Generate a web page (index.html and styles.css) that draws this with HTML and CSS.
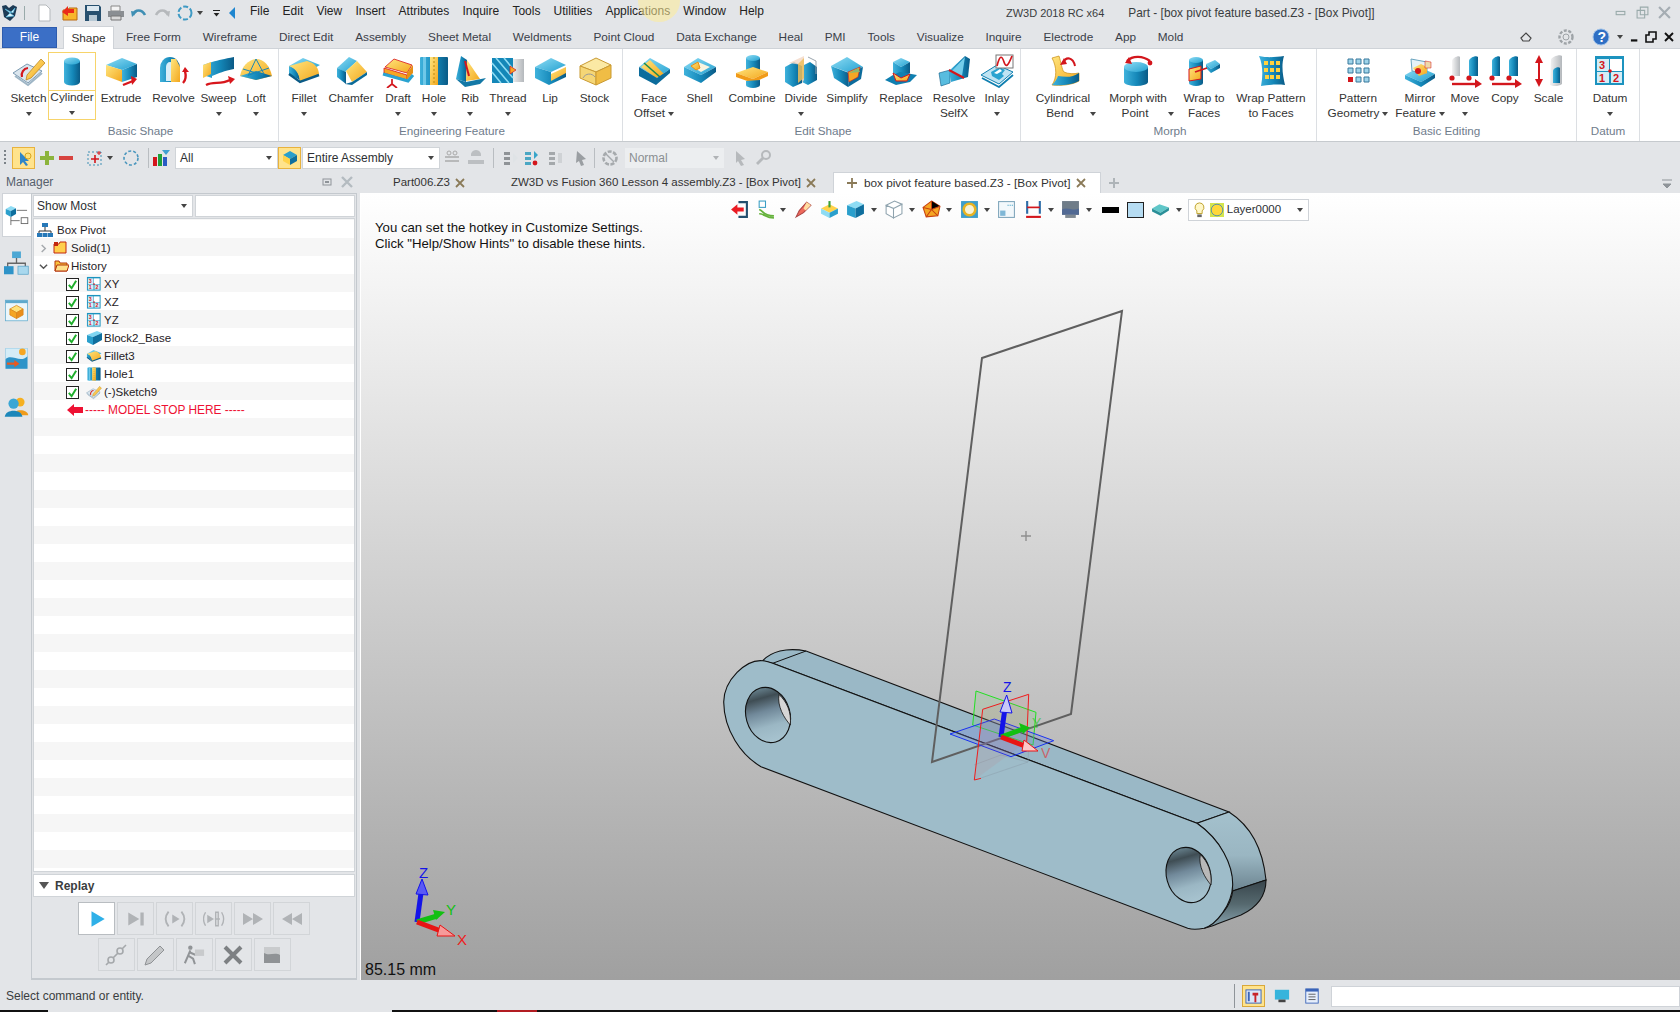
FILE: index.html
```html
<!DOCTYPE html>
<html lang="en">
<head>
<meta charset="utf-8">
<title>ZW3D 2018 RC x64</title>
<link rel="stylesheet" href="styles.css">
</head>
<body>
<svg class="defs" aria-hidden="true">
<defs>
<linearGradient id="gb" x1="0" x2="1" y1="0" y2="0"><stop offset="0" stop-color="#3fb2dc"/><stop offset=".55" stop-color="#1487b8"/><stop offset="1" stop-color="#0a5a86"/></linearGradient>
<linearGradient id="gt" x1="0" x2="1" y1="0" y2="1"><stop offset="0" stop-color="#8edcf4"/><stop offset="1" stop-color="#22a0d0"/></linearGradient>
<linearGradient id="gy" x1="0" x2="1" y1="0" y2="1"><stop offset="0" stop-color="#ffe57e"/><stop offset="1" stop-color="#f3a71d"/></linearGradient>
<linearGradient id="gg" x1="0" x2="1" y1="0" y2="0"><stop offset="0" stop-color="#f4f4f4"/><stop offset="1" stop-color="#b4b8bc"/></linearGradient>
<linearGradient id="holeg" x1="0" x2="0" y1="0" y2="1"><stop offset="0" stop-color="#66808c"/><stop offset=".18" stop-color="#3f4d54"/><stop offset=".42" stop-color="#71899a"/><stop offset=".7" stop-color="#9bb7c4"/><stop offset="1" stop-color="#a8c4d0"/></linearGradient>
<linearGradient id="rimup" x1="0" x2="0" y1="0" y2="1"><stop offset="0" stop-color="#a4c1cd"/><stop offset=".55" stop-color="#9ab6c2"/><stop offset="1" stop-color="#6c8490"/></linearGradient>
<linearGradient id="rimlo" x1="0" x2="0" y1="0" y2="1"><stop offset="0" stop-color="#37444b"/><stop offset=".5" stop-color="#56696f"/><stop offset="1" stop-color="#8ba7b3"/></linearGradient>

<symbol id="sketch" viewBox="0 0 34 34"><path d="M1 19 15 10 30 17 16 29Z" fill="#dbe6ee" stroke="#7b9ab2"/><path d="M3 22 16 31 30 19" fill="none" stroke="#9fb6c6" stroke-width="2"/><path d="M10 23a7 7 0 0 1 6-9" fill="none" stroke="#d3161c" stroke-width="2.2"/><path d="M15 21 29 5 33 9 19 24 14 26Z" fill="url(#gy)" stroke="#b67d12" stroke-width=".7"/></symbol>
<symbol id="cyl" viewBox="0 0 34 34"><path d="M9 7V28a8 3.5 0 0 0 16 0V7Z" fill="url(#gb)"/><ellipse cx="17" cy="7" rx="8" ry="3.6" fill="url(#gt)"/></symbol>
<symbol id="extrude" viewBox="0 0 34 34"><path d="M2 11 18 4 33 10 18 16Z" fill="url(#gt)"/><path d="M2 11 18 16V28L2 22Z" fill="url(#gy)"/><path d="M18 16 33 10V23L18 28Z" fill="url(#gb)"/><path d="M19 31 29 27" stroke="#d8161c" stroke-width="2.4"/><path d="M27 22 33 25 28 31Z" fill="#d8161c"/></symbol>
<symbol id="revolve" viewBox="0 0 34 34"><path d="M3 14a10 11 0 0 1 20 0V28H3Z" fill="url(#gb)"/><path d="M9 13a4 5 0 0 1 8 0V27H9Z" fill="#d8eef8"/><path d="M14 5h5l4 8V28H14Z" fill="url(#gy)"/><path d="M26 29c3-3 3-8 2-12" fill="none" stroke="#d8161c" stroke-width="2.4"/><path d="M25 18 28 13 32 18Z" fill="#d8161c"/></symbol>
<symbol id="sweep" viewBox="0 0 34 34"><path d="M1 11 10 8C17 6 22 5 32 3V15C22 17 17 19 10 22V24L1 21Z" fill="url(#gb)"/><path d="M1 11 9 8V20L1 24Z" fill="url(#gy)"/><path d="M4 31C12 27 18 31 28 26" fill="none" stroke="#d8161c" stroke-width="2.4"/><path d="M26 22 33 25 28 30Z" fill="#d8161c"/></symbol>
<symbol id="loft" viewBox="0 0 34 34"><path d="M1 22C3 12 9 6 17 5 25 5 31 12 33 22L17 26Z" fill="url(#gy)"/><path d="M1 22 17 26 33 22 17 17Z" fill="url(#gb)"/><path d="M17 5 9 22M17 5 25 20M4 15 24 21M30 14 10 21" stroke="#1a86b6" fill="none"/></symbol>
<symbol id="fillet" viewBox="0 0 34 34"><path d="M2 12 16 4 33 11 22 17Z" fill="url(#gt)"/><path d="M2 12C8 13 12 18 13 26L2 20Z" fill="url(#gb)"/><path d="M2 12 20 7C28 9 32 14 32 21L13 28C13 20 8 14 2 12Z" fill="url(#gy)"/><path d="M2 20 13 28 32 21" fill="none" stroke="#0a5a86" stroke-width="2.4"/></symbol>
<symbol id="chamfer" viewBox="0 0 34 34"><path d="M3 14 15 3 23 7 11 18Z" fill="url(#gt)"/><path d="M3 14 12 18 12 30 3 23Z" fill="url(#gb)"/><path d="M12 17 23 7 33 18 18 28Z" fill="url(#gy)"/><path d="M11 30 18 28 33 18V21L18 31Z" fill="#0a6a98"/></symbol>
<symbol id="draft" viewBox="0 0 34 34"><path d="M4 13 13 5 31 11 26 19Z" fill="url(#gy)" stroke="#d8161c" stroke-width=".8"/><path d="M3 14 26 21V26L3 19Z" fill="#f5a623" stroke="#d8161c" stroke-width=".8"/><path d="M26 19 32 11V19L26 26Z" fill="#e69015"/><path d="M2 20 27 27 32 21" fill="none" stroke="#2aa3d0" stroke-width="3"/><path d="M11 25V30L6 34M11 30 16 34" stroke="#d3161c" stroke-width="1.7" fill="none"/></symbol>
<symbol id="hole" viewBox="0 0 34 34"><rect x="3" y="3" width="28" height="28" rx="1" fill="url(#gb)"/><rect x="6" y="3" width="3" height="28" fill="#6fc8e8"/><rect x="13" y="3" width="8" height="28" fill="url(#gy)"/><path d="M17 3V31" stroke="#b98b10" stroke-dasharray="2 2"/></symbol>
<symbol id="rib" viewBox="0 0 34 34"><path d="M3 25 8 2 14 6 13 28Z" fill="url(#gb)"/><path d="M14 6 27 25 13 27Z" fill="url(#gy)"/><path d="M12 7 16 22" stroke="#d3161c" stroke-width="2"/><path d="M3 25 13 28 33 24 27 30 12 33Z" fill="#1378a6"/></symbol>
<symbol id="thread" viewBox="0 0 34 34"><rect x="20" y="5" width="13" height="23" fill="url(#gg)"/><rect x="1" y="4" width="21" height="25" fill="#1487b8"/><path d="M1 9 18 29M1 18 10 29M5 4 22 24M13 4 22 15" stroke="#8edcf4" stroke-width="1.6"/><path d="M19 12 25 16 19 20Z" fill="#f5a623" stroke="#d3161c" stroke-width=".7"/></symbol>
<symbol id="lip" viewBox="0 0 34 34"><path d="M2 13 18 4 33 11 18 18Z" fill="url(#gt)"/><path d="M2 13 18 18V21L33 15V23L16 31 2 24Z" fill="url(#gb)"/><path d="M18 20 33 13V19L18 27Z" fill="url(#gy)"/></symbol>
<symbol id="stock" viewBox="0 0 34 34"><path d="M2 12 18 4 33 11 18 18Z" fill="#fbe9a4" stroke="#c99a33"/><path d="M2 12 18 18V31L2 24Z" fill="#f5d676" stroke="#c99a33"/><path d="M18 18 33 11V24L18 31Z" fill="#f0bd45" stroke="#c99a33"/><path d="M5 24a7 7 0 0 1 12-1" stroke="#999" fill="none"/></symbol>
<symbol id="faceoff" viewBox="0 0 34 34"><path d="M2 13 13 4 33 15 20 24Z" fill="url(#gt)"/><path d="M4 13 13 6 27 20 19 24Z" fill="url(#gy)"/><path d="M7 9 23 23" stroke="#1a8a50" stroke-width="1.6"/><path d="M2 13 20 24 33 15V19L19 31 2 22Z" fill="#0c6c9c"/></symbol>
<symbol id="shell" viewBox="0 0 34 34"><path d="M1 13 15 4 33 13 18 21Z" fill="url(#gt)"/><path d="M8 12 15 8 27 13 18 18Z" fill="#f9f4df"/><path d="M8 12 15 8 17 14 13 16Z" fill="url(#gy)" stroke="#e69015"/><path d="M1 13 18 21 33 13V18L18 29 1 21Z" fill="url(#gb)"/></symbol>
<symbol id="combine" viewBox="0 0 34 34"><path d="M11 4V17a7 3 0 0 0 14 0V4Z" fill="url(#gb)"/><ellipse cx="18" cy="4" rx="7" ry="3" fill="url(#gt)"/><path d="M1 19 18 13 33 18 18 25Z" fill="url(#gy)"/><path d="M1 19 18 25V29L1 23ZM18 25 33 18V22L18 29Z" fill="#f19b18"/><path d="M11 27V31a7 3 0 0 0 14 0V26Z" fill="url(#gb)"/></symbol>
<symbol id="divide" viewBox="0 0 34 34"><path d="M1 13 10 8 18 12V29L9 33 1 28Z" fill="url(#gb)"/><path d="M18 12 26 8 33 13V26L24 31 18 28Z" fill="url(#gb)"/><path d="M5 9 20 2V26L18 29V11Z" fill="#f2d7c6" opacity=".8"/><path d="M14 10 20 4V24L14 29Z" fill="#eec05d" opacity=".85"/><path d="M24 3 32 7V20" fill="none" stroke="#9aa5ad"/></symbol>
<symbol id="simplify" viewBox="0 0 34 34"><path d="M1 12 17 3 33 13 20 19Z" fill="url(#gt)"/><path d="M1 12 19 19 18 33 4 24Z" fill="url(#gb)"/><path d="M19 19 33 13 31 25 18 33Z" fill="#0c6c9c"/><path d="M18 18 30 13 28 23 19 28Z" fill="#f5a623" stroke="#d3161c" stroke-width=".6"/><path d="M19 19 28 14 30 18Z" fill="#8db86d"/></symbol>
<symbol id="replace" viewBox="0 0 34 34"><path d="M9 8 17 4 26 8 17 13Z" fill="url(#gt)"/><path d="M9 8 17 13V24L9 19ZM17 13 26 8V19L17 24Z" fill="url(#gb)"/><path d="M1 26 9 21 16 18 33 21 26 28 12 31Z" fill="#0f7fb0"/><path d="M9 19 17 24 26 20 23 27H12Z" fill="url(#gy)" stroke="#d3161c"/></symbol>
<symbol id="resolve" viewBox="0 0 34 34"><path d="M2 19 13 16V29L4 32Z" fill="#58bcdf" stroke="#0a5a86" stroke-width=".6"/><path d="M12 17 28 2 33 5 31 23 14 28Z" fill="url(#gb)"/><path d="M14 18 28 3 25 22Z" fill="#74cdea"/><path d="M12 16 27 24" stroke="#d3161c" stroke-width="2.2"/></symbol>
<symbol id="inlay" viewBox="0 0 34 34"><path d="M1 21 17 11 33 18 19 30Z" fill="#bfe4f3" stroke="#0f7fb0"/><path d="M11 18 20 13 25 16 22 20 24 22 19 26 12 22Z" fill="#2aa3d0"/><path d="M14 19 20 15 22 17 17 20Z" fill="#fff"/><path d="M2 24 19 33 33 21" fill="none" stroke="#0f7fb0" stroke-width="1.8"/><rect x="16" y="1" width="17" height="13" fill="#fff" stroke="#777"/><path d="M17 12C20 0 22 2 24 8S28 12 32 2" stroke="#d3161c" stroke-width="1.7" fill="none"/></symbol>
<symbol id="cbend" viewBox="0 0 34 34"><path d="M6 4 13 2C15 8 16 16 18 18 22 20 28 20 33 19V27C26 31 14 32 6 31 11 24 11 13 6 4Z" fill="url(#gy)" stroke="#c98d10" stroke-width=".7"/><path d="M12 22C19 23 26 24 33 19V27C26 31 14 32 6 31 9 28 11 25 12 22Z" fill="url(#gb)"/><path d="M17 9C20 2 27 3 29 12" fill="none" stroke="#d3161c" stroke-width="2"/><path d="M14 11 18 4 21 10Z" fill="#d3161c"/></symbol>
<symbol id="mpoint" viewBox="0 0 34 34"><path d="M3 13V28a12 4 0 0 0 24 0V13Z" fill="url(#gb)"/><ellipse cx="15" cy="13" rx="12" ry="5" fill="url(#gt)"/><path d="M6 7C12 1 22 2 29 7" fill="none" stroke="#d3161c" stroke-width="2.4"/><path d="M8 3 4 9 11 10Z" fill="#d3161c"/><circle cx="29" cy="9" r="2.4" fill="#d3161c"/></symbol>
<symbol id="wrapf" viewBox="0 0 34 34"><path d="M2 6V29a7 3 0 0 0 14 0V6Z" fill="url(#gb)"/><ellipse cx="9" cy="6" rx="7" ry="3" fill="url(#gt)"/><path d="M2 15 14 12V25L2 27Z" fill="url(#gy)" stroke="#d3161c"/><path d="M19 10 28 6 33 10 24 15Z" fill="url(#gt)"/><path d="M19 10 24 15V19L19 14ZM24 15 33 10V14L24 19Z" fill="url(#gb)"/><path d="M8 18 20 14" stroke="#d3161c" stroke-width="1.8"/></symbol>
<symbol id="wrapp" viewBox="0 0 34 34"><path d="M5 2C14 4 22 3 30 2 27 12 29 22 31 31 22 30 14 31 7 32 9 22 9 11 5 2Z" fill="url(#gb)"/><path d="M10 7h4v4h-4zM16 7h4v4h-4zM22 7h4v4h-4zM10 14h4v4h-4zM16 14h4v4h-4zM22 14h4v4h-4zM11 21h4v4h-4zM16 21h4v4h-4zM22 21h4v4h-4z" fill="#ffd23f"/></symbol>
<symbol id="pattern" viewBox="0 0 34 34"><path d="M7 5h5v5H7zM15 5h5v5h-5zM23 5h5v5h-5zM7 14h5v5H7zM15 14h5v5h-5zM23 14h5v5h-5zM15 23h5v5h-5zM23 23h5v5h-5z" fill="#9fd4ea" stroke="#38799c"/><rect x="7" y="23" width="5" height="5" fill="#d3161c"/></symbol>
<symbol id="mirror" viewBox="0 0 34 34"><path d="M2 21 16 13 32 20 18 28Z" fill="url(#gt)"/><path d="M2 21 18 28 32 20V24L18 33 2 25Z" fill="url(#gb)"/><path d="M8 5 24 8V20L9 17Z" fill="#e4f1f7" stroke="#6aa4bf"/><path d="M10 14 18 10 24 13 24 19 16 22Z" fill="url(#gy)"/><circle cx="15" cy="17" r="3" fill="#d3161c"/><path d="M22 7 28 8V14L22 14Z" fill="#eed9a8" stroke="#d3161c" stroke-width=".5"/></symbol>
<symbol id="move" viewBox="0 0 34 34"><path d="M4 7C4 4 11 1 12 3V22H4Z" fill="url(#gg)"/><path d="M21 7C21 4 28 1 30 3V22H21Z" fill="url(#gb)"/><circle cx="4" cy="24" r="2.6" fill="#d3161c"/><circle cx="21" cy="24" r="2.6" fill="#d3161c"/><path d="M4 30H29" stroke="#d3161c" stroke-width="2.4"/><path d="M27 25 34 30 27 34Z" fill="#d3161c"/></symbol>
<symbol id="copy" viewBox="0 0 34 34"><path d="M4 7C4 4 11 1 12 3V22H4Z" fill="url(#gb)"/><path d="M21 7C21 4 28 1 30 3V22H21Z" fill="url(#gb)"/><circle cx="4" cy="24" r="2.6" fill="#d3161c"/><circle cx="21" cy="24" r="2.6" fill="#d3161c"/><path d="M4 30H29" stroke="#d3161c" stroke-width="2.4"/><path d="M27 25 34 30 27 34Z" fill="#d3161c"/></symbol>
<symbol id="scale" viewBox="0 0 34 34"><path d="M7 5V28" stroke="#d3161c" stroke-width="2"/><path d="M3 9 7 1 11 9ZM3 25 7 33 11 25Z" fill="#d3161c"/><path d="M19 6C19 3 28 0 30 2V30C26 33 20 32 18 31Z" fill="url(#gg)"/><path d="M21 17C21 14 27 12 28 14V29H21Z" fill="url(#gb)"/></symbol>
<symbol id="datum" viewBox="0 0 34 34"><rect x="2" y="2" width="29" height="29" fill="#1c93bf"/><rect x="17" y="5" width="12" height="12" fill="#fff"/><rect x="4" y="18" width="12" height="11" fill="#d6edf6"/><rect x="18" y="18" width="11" height="11" fill="#d6edf6"/><rect x="4" y="5" width="12" height="12" fill="#d6edf6"/><text class="dnum" x="6" y="15">3</text><text class="dnum" x="6" y="28">1</text><text class="dnum" x="20" y="28">2</text><circle cx="17" cy="17" r="1.8" fill="#d3161c"/></symbol>
<symbol id="block" viewBox="0 0 16 16"><path d="M1 5 11 1 16 3 7 7Z" fill="#7fd6f2"/><path d="M1 5 7 7V15L1 12Z" fill="#2a9fcc"/><path d="M7 7 16 3V10L7 15Z" fill="#0f6f9e"/></symbol>
<symbol id="tickm" viewBox="0 0 12 12"><path d="M2 6.5 5 10 10 2" fill="none" stroke="#1fae2c" stroke-width="2.2"/></symbol>
<symbol id="xm" viewBox="0 0 12 12"><path d="M2 2 10 10M10 2 2 10" stroke="#8a7a58" stroke-width="1.8"/></symbol>
<symbol id="folder" viewBox="0 0 16 16"><path d="M1 4H6L7 2H13V13H1Z" fill="#ffcf4d" stroke="#c2260e"/><rect x="1" y="2" width="4" height="4" fill="#c2260e"/></symbol>
<symbol id="folderopen" viewBox="0 0 16 16"><path d="M2 13V3H6L7 5H14V13Z" fill="#f9c23c" stroke="#b3340c"/><path d="M2 13 4 7H16L14 13Z" fill="#ffe08a" stroke="#b3340c"/></symbol>
<symbol id="org" viewBox="0 0 34 34"><rect x="11" y="2" width="12" height="9" fill="#4ba7d4"/><path d="M17 11V18M5 24V18H29V24" fill="none" stroke="#666" stroke-width="1.8"/><rect x="0" y="22" width="13" height="11" fill="#2e93c8"/><rect x="19" y="22" width="14" height="11" fill="#a9d8ee" stroke="#5aa3c8"/></symbol>
</defs>
</svg>

<div class="app">
  <header class="titlebar">
    <svg class="qi logo" viewBox="0 0 18 18"><path d="M1 2 5 1 8 4 12 1 16 3 14 12 9 17 3 13Z" fill="#1d3b56"/><path d="M4 5 9 9 5 13 13 12 9 9 14 4 12 9Z" fill="#dff3fb" stroke="#4fc0e8" stroke-width=".6"/></svg>
    <span class="qsep"></span>
    <svg class="qi i-new" viewBox="0 0 16 18"><path d="M3 1H10L14 5V17H3Z" fill="#fff" stroke="#b5b9bc"/></svg>
    <svg class="qi" viewBox="0 0 18 18"><path d="M2 6H7L8 4H16V16H2Z" fill="#f8b62c" stroke="#bb6a10"/><path d="M1 8 7 2V5H13V9H7L7 12Z" fill="#ea2b1a"/></svg>
    <svg class="qi" viewBox="0 0 18 18"><path d="M1 1H15L17 3V17H1Z" fill="#27506f"/><rect x="3" y="2" width="12" height="5" fill="#dce8f0"/><rect x="5" y="11" width="8" height="6" fill="#b7c8d4"/></svg>
    <svg class="qi" viewBox="0 0 18 18"><path d="M4 2H13V7H4Z" fill="#f4f4f4" stroke="#888"/><path d="M1 7H17V13H1Z" fill="#8a8e92"/><path d="M4 12H14V16H4Z" fill="#d8d8d8" stroke="#777"/></svg>
    <svg class="qi" viewBox="0 0 18 18"><path d="M3 11C5 5 12 5 15 11" fill="none" stroke="#3f8fb4" stroke-width="2.6"/><path d="M1 7 7 8 2 13Z" fill="#3f8fb4"/></svg>
    <svg class="qi" viewBox="0 0 18 18"><path d="M15 11C13 5 6 5 3 11" fill="none" stroke="#b6b9bc" stroke-width="2.6"/><path d="M17 7 11 8 16 13Z" fill="#b6b9bc"/></svg>
    <svg class="qi" viewBox="0 0 18 18"><circle cx="9" cy="9" r="6.5" fill="none" stroke="#3f9ac4" stroke-width="2" stroke-dasharray="5 2"/></svg>
    <span class="caret small"></span>
    <span class="ddmark"></span>
    <svg class="backmark" viewBox="0 0 8 14"><path d="M7 1 1 7 7 13Z" fill="#1f86cf"/></svg>
    <nav class="menu"><span>File</span><span>Edit</span><span>View</span><span>Insert</span><span>Attributes</span><span>Inquire</span><span>Tools</span><span>Utilities</span><span>Applications</span><span>Window</span><span>Help</span></nav>
    <span class="apptitle">ZW3D 2018 RC x64</span>
    <span class="doctitle">Part - [box pivot feature based.Z3 - [Box Pivot]]</span>
    <span class="winbtns">
      <svg viewBox="0 0 12 12"><rect x="2" y="5" width="8" height="3" fill="none" stroke="#9aa"/></svg>
      <svg viewBox="0 0 12 12"><path d="M4 1H11V8H4ZM1 4H8V11H1Z" fill="#e3e5e8" stroke="#9aa"/></svg>
      <svg viewBox="0 0 12 12"><path d="M1 1 11 11M11 1 1 11" stroke="#a5adb3" stroke-width="2"/></svg>
    </span>
    <span class="cursor-glow"></span>
  </header>

  <div class="ribbontabs">
    <span class="filetab">File</span>
    <span class="rtab active">Shape</span>
    <span class="rtab">Free Form</span><span class="rtab">Wireframe</span><span class="rtab">Direct Edit</span><span class="rtab">Assembly</span><span class="rtab">Sheet Metal</span><span class="rtab">Weldments</span><span class="rtab">Point Cloud</span><span class="rtab">Data Exchange</span><span class="rtab">Heal</span><span class="rtab">PMI</span><span class="rtab">Tools</span><span class="rtab">Visualize</span><span class="rtab">Inquire</span><span class="rtab">Electrode</span><span class="rtab">App</span><span class="rtab">Mold</span>
    <span class="rtab-right">
      <svg class="r-home" viewBox="0 0 12 12"><path d="M1 7 6 2 11 7 9 10H3Z" fill="none" stroke="#444" stroke-width="1.2"/></svg>
      <svg class="r-gear" viewBox="0 0 20 20"><circle cx="10" cy="10" r="6.5" fill="none" stroke="#9ea3a7" stroke-width="2.4" stroke-dasharray="3 1.6"/><circle cx="10" cy="10" r="3" fill="none" stroke="#9ea3a7"/></svg>
      <svg class="r-help" viewBox="0 0 18 18"><circle cx="9" cy="9" r="8" fill="#2f6fc4" stroke="#9cc0e8"/><text class="helpq" x="5.6" y="14">?</text></svg>
      <span class="caret r-caret"></span>
      <svg class="r-min" viewBox="0 0 12 12"><rect x="1" y="8" width="7" height="2.4" fill="#111"/></svg>
      <svg class="r-rest" viewBox="0 0 12 12"><path d="M4 1H11V8H8V11H1V4H4Z" fill="none" stroke="#111" stroke-width="1.6"/></svg>
      <svg class="r-close" viewBox="0 0 12 12"><path d="M2 2 10 10M10 2 2 10" stroke="#111" stroke-width="1.9"/></svg>
    </span>
  </div>

  <section class="ribbon">
    <div class="group g1"><div class="tools">
      <div class="tool"><svg class="ic"><use href="#sketch"/></svg><span class="l">Sketch</span><span class="l"><i class="caret"></i></span></div>
      <div class="tool hot"><svg class="ic"><use href="#cyl"/></svg><span class="l">Cylinder</span><span class="l"><i class="caret"></i></span></div>
      <div class="tool"><svg class="ic"><use href="#extrude"/></svg><span class="l">Extrude</span></div>
      <div class="tool"><svg class="ic"><use href="#revolve"/></svg><span class="l">Revolve</span></div>
      <div class="tool"><svg class="ic"><use href="#sweep"/></svg><span class="l">Sweep</span><span class="l"><i class="caret"></i></span></div>
      <div class="tool"><svg class="ic"><use href="#loft"/></svg><span class="l">Loft</span><span class="l"><i class="caret"></i></span></div>
    </div><div class="gname">Basic Shape</div></div>
    <div class="group g2"><div class="tools">
      <div class="tool"><svg class="ic"><use href="#fillet"/></svg><span class="l">Fillet</span><span class="l"><i class="caret"></i></span></div>
      <div class="tool"><svg class="ic"><use href="#chamfer"/></svg><span class="l">Chamfer</span></div>
      <div class="tool"><svg class="ic"><use href="#draft"/></svg><span class="l">Draft</span><span class="l"><i class="caret"></i></span></div>
      <div class="tool"><svg class="ic"><use href="#hole"/></svg><span class="l">Hole</span><span class="l"><i class="caret"></i></span></div>
      <div class="tool"><svg class="ic"><use href="#rib"/></svg><span class="l">Rib</span><span class="l"><i class="caret"></i></span></div>
      <div class="tool"><svg class="ic"><use href="#thread"/></svg><span class="l">Thread</span><span class="l"><i class="caret"></i></span></div>
      <div class="tool"><svg class="ic"><use href="#lip"/></svg><span class="l">Lip</span></div>
      <div class="tool"><svg class="ic"><use href="#stock"/></svg><span class="l">Stock</span></div>
    </div><div class="gname">Engineering Feature</div></div>
    <div class="group g3"><div class="tools">
      <div class="tool"><svg class="ic"><use href="#faceoff"/></svg><span class="l">Face</span><span class="l">Offset<i class="caret in"></i></span></div>
      <div class="tool"><svg class="ic"><use href="#shell"/></svg><span class="l">Shell</span></div>
      <div class="tool"><svg class="ic"><use href="#combine"/></svg><span class="l">Combine</span></div>
      <div class="tool"><svg class="ic"><use href="#divide"/></svg><span class="l">Divide</span><span class="l"><i class="caret"></i></span></div>
      <div class="tool"><svg class="ic"><use href="#simplify"/></svg><span class="l">Simplify</span></div>
      <div class="tool"><svg class="ic"><use href="#replace"/></svg><span class="l">Replace</span></div>
      <div class="tool"><svg class="ic"><use href="#resolve"/></svg><span class="l">Resolve</span><span class="l">SelfX</span></div>
      <div class="tool"><svg class="ic"><use href="#inlay"/></svg><span class="l">Inlay</span><span class="l"><i class="caret"></i></span></div>
    </div><div class="gname">Edit Shape</div></div>
    <div class="group g4"><div class="tools">
      <div class="tool"><svg class="ic"><use href="#cbend"/></svg><span class="l">Cylindrical</span><span class="l far1">Bend<i class="caret"></i></span></div>
      <div class="tool"><svg class="ic"><use href="#mpoint"/></svg><span class="l">Morph with</span><span class="l far2">Point<i class="caret"></i></span></div>
      <div class="tool"><svg class="ic"><use href="#wrapf"/></svg><span class="l">Wrap to</span><span class="l">Faces</span></div>
      <div class="tool"><svg class="ic"><use href="#wrapp"/></svg><span class="l">Wrap Pattern</span><span class="l">to Faces</span></div>
    </div><div class="gname">Morph</div></div>
    <div class="group g5"><div class="tools">
      <div class="tool"><svg class="ic"><use href="#pattern"/></svg><span class="l">Pattern</span><span class="l">Geometry<i class="caret in"></i></span></div>
      <div class="tool"><svg class="ic"><use href="#mirror"/></svg><span class="l">Mirror</span><span class="l">Feature<i class="caret in"></i></span></div>
      <div class="tool"><svg class="ic"><use href="#move"/></svg><span class="l">Move</span><span class="l"><i class="caret"></i></span></div>
      <div class="tool"><svg class="ic"><use href="#copy"/></svg><span class="l">Copy</span></div>
      <div class="tool"><svg class="ic"><use href="#scale"/></svg><span class="l">Scale</span></div>
    </div><div class="gname">Basic Editing</div></div>
    <div class="group g6"><div class="tools">
      <div class="tool"><svg class="ic"><use href="#datum"/></svg><span class="l">Datum</span><span class="l"><i class="caret"></i></span></div>
    </div><div class="gname">Datum</div></div>
  </section>

  <div class="toolbar">
    <span class="grip"></span>
    <span class="tb-hot t1"><svg viewBox="0 0 18 18"><path d="M5 3 5 16 8 13 11 17 13 16 10 12 14 12Z" fill="#2f86c8"/><circle cx="13" cy="7" r="3" fill="#ffe27a" stroke="#d9a520"/></svg></span>
    <svg class="tbi t2" viewBox="0 0 18 18"><path d="M7 2H11V7H16V11H11V16H7V11H2V7H7Z" fill="#8cb43c"/></svg>
    <svg class="tbi t3" viewBox="0 0 18 18"><rect x="2" y="7" width="14" height="4" fill="#d7433f"/></svg>
    <svg class="tbi t4" viewBox="0 0 18 18"><rect x="2" y="3" width="13" height="13" fill="none" stroke="#3f8fb4" stroke-dasharray="2 2"/><path d="M9 6V14M5 10H13" stroke="#d3161c" stroke-width="1.6"/><path d="M13 2V6M11 4H15" stroke="#d3161c"/></svg>
    <span class="caret t5"></span>
    <svg class="tbi t6" viewBox="0 0 18 18"><circle cx="9" cy="9" r="7" fill="none" stroke="#4a96bd" stroke-width="1.6" stroke-dasharray="3 2"/></svg>
    <span class="tbsep t7"></span>
    <svg class="tbi t8" viewBox="0 0 18 18"><rect x="1" y="8" width="4" height="9" fill="#d3161c"/><rect x="6" y="5" width="4" height="12" fill="#1fa03a"/><rect x="11" y="8" width="4" height="9" fill="#2a5cc4"/><path d="M10 1H18L14 6Z" fill="#3fa0d0"/></svg>
    <span class="combo c-all">All<i class="caret"></i></span>
    <span class="tb-hot t9"><svg viewBox="0 0 18 18"><path d="M2 6 9 2 16 6 9 10Z" fill="#2a9fcc"/><path d="M2 6 9 10V16L2 12Z" fill="#ffd24a"/><path d="M9 10 16 6V12L9 16Z" fill="#0f6f9e"/></svg></span>
    <span class="combo c-asm">Entire Assembly<i class="caret"></i></span>
    <svg class="tbi t10" viewBox="0 0 18 18"><path d="M2 8H16M2 12H16" stroke="#aaa" stroke-width="1.5"/><circle cx="6" cy="4" r="2" fill="none" stroke="#aaa"/><circle cx="12" cy="4" r="2" fill="none" stroke="#aaa"/></svg>
    <svg class="tbi t10b" viewBox="0 0 18 18"><path d="M9 1a5 5 0 0 1 5 6H4a5 5 0 0 1 5-6ZM1 11H17V15H1Z" fill="#bcbfc2"/></svg>
    <span class="tbsep t11"></span>
    <svg class="tbi t12" viewBox="0 0 18 18"><path d="M2 3H8V6H2ZM2 8H8V11H2ZM2 13H8V16H2Z" fill="#8f9397"/><path d="M11 4 16 9 11 14Z" fill="#dfe3e6"/></svg>
    <svg class="tbi t13" viewBox="0 0 18 18"><path d="M2 3H8V6H2ZM2 8H8V11H2ZM2 13H8V16H2Z" fill="#4ba7c4"/><path d="M11 2 15 6 11 10Z" fill="#39a5c9"/><circle cx="12" cy="14" r="2.4" fill="#d3161c"/></svg>
    <svg class="tbi t14" viewBox="0 0 18 18"><path d="M2 3H8V6H2ZM2 8H8V11H2ZM2 13H8V16H2Z" fill="#a4a8ab"/><path d="M11 4H15V14H11Z" fill="#cfd2d5"/></svg>
    <svg class="tbi t15" viewBox="0 0 18 18"><path d="M5 2 14 10 10 11 12 16 9 17 7 12 4 14Z" fill="#9a9ea2"/></svg>
    <span class="tbsep t16"></span>
    <svg class="tbi t17" viewBox="0 0 18 18"><circle cx="9" cy="9" r="6.5" fill="none" stroke="#a6aaad" stroke-width="2.6" stroke-dasharray="4 1.5"/><path d="M5 5 13 13" stroke="#a6aaad" stroke-width="1.5"/></svg>
    <span class="combo c-norm">Normal<i class="caret lt"></i></span>
    <svg class="tbi t18" viewBox="0 0 18 18"><path d="M3 2 12 10 8 11 11 16 8 17 5 12 3 14Z" fill="#b6b9bc"/></svg>
    <svg class="tbi t19" viewBox="0 0 18 18"><path d="M2 14 8 8 10 10 4 16Z" fill="#b6b9bc"/><circle cx="12" cy="6" r="4" fill="none" stroke="#b6b9bc" stroke-width="2"/></svg>
  </div>

  <div class="docrow">
    <div class="mgrhead"><span>Manager</span>
      <svg class="mg-pin" viewBox="0 0 10 10"><rect x="1" y="2" width="8" height="6" fill="none" stroke="#8f9499"/><rect x="3" y="4" width="4" height="2" fill="#8f9499"/></svg>
      <svg class="mg-x" viewBox="0 0 14 12"><path d="M2 1 12 11M12 1 2 11" stroke="#b4bbc0" stroke-width="2.4"/></svg>
    </div>
    <div class="dtabs">
      <span class="dtab d1">Part006.Z3<svg class="dx"><use href="#xm"/></svg></span>
      <span class="dtab d2">ZW3D vs Fusion 360 Lesson 4 assembly.Z3 - [Box Pivot]<svg class="dx"><use href="#xm"/></svg></span>
      <span class="dtab d3"><svg class="dplus" viewBox="0 0 12 12"><path d="M6 1V11M1 6H11" stroke="#8a7a58" stroke-width="1.8"/></svg>box pivot feature based.Z3 - [Box Pivot]<svg class="dx"><use href="#xm"/></svg></span>
      <svg class="dnew" viewBox="0 0 12 12"><path d="M6 1V11M1 6H11" stroke="#aeb4b8" stroke-width="2"/></svg>
      <svg class="dmore" viewBox="0 0 12 12"><path d="M1 2H11M2 6H10L6 10Z" stroke="#8f9499" fill="#8f9499"/></svg>
    </div>
  </div>

  <main class="main">
    <aside class="rail">
      <span class="railbtn active"><svg viewBox="0 0 34 34"><path d="M1 8 8 4 15 7 8 11Z" fill="#8edcf4"/><path d="M1 8 8 11V19L1 15Z" fill="#2a9fcc"/><path d="M8 11 15 7V15L8 19Z" fill="#0f6f9e"/><path d="M8 19V30M8 24H20M16 10H30" stroke="#666" stroke-width="1.2" fill="none"/><rect x="22" y="20" width="9" height="8" fill="#fff" stroke="#666" stroke-width="1.2"/></svg></span>
      <span class="railbtn"><svg><use href="#org"/></svg></span>
      <span class="railbtn"><svg viewBox="0 0 34 34"><rect x="2" y="3" width="30" height="28" fill="#ebf6fb" stroke="#5ea9cc"/><rect x="2" y="3" width="30" height="4" fill="#5ea9cc"/><path d="M8 15 17 10 26 15 17 20Z" fill="#ffe27a" stroke="#d9861a"/><path d="M8 15 17 20V28L8 23Z" fill="#f5a623" stroke="#d9861a"/><path d="M17 20 26 15V23L17 28Z" fill="#ea8e1b" stroke="#d9861a"/></svg></span>
      <span class="railbtn"><svg viewBox="0 0 34 34"><rect x="2" y="3" width="30" height="28" fill="#2e93c8"/><path d="M2 18C10 10 22 24 32 14V3H2Z" fill="#d4ecf7"/><circle cx="25" cy="8" r="4.5" fill="#f5a623"/><path d="M4 24H16" stroke="#e85a20" stroke-width="3"/><path d="M14 19 21 24 14 29Z" fill="#e85a20"/></svg></span>
      <span class="railbtn"><svg viewBox="0 0 34 34"><circle cx="22" cy="11" r="6" fill="#f5b021"/><path d="M12 29C13 20 32 20 33 29Z" fill="#ef9b1a"/><circle cx="13" cy="13" r="7" fill="#3ba6d4"/><path d="M1 31C2 20 24 20 25 31Z" fill="#1d87ba"/></svg></span>
    </aside>

    <section class="manager">
      <div class="mgrtop"><span class="combo c-show">Show Most<i class="caret"></i></span><span class="mgrsearch"></span></div>
      <div class="tree">
        <div class="row r0"><svg class="ti" viewBox="0 0 16 16"><rect x="5" y="1" width="6" height="4" fill="#2678b8"/><path d="M8 5V9M2 12V9H14V12" stroke="#333" fill="none"/><rect x="0" y="11" width="5" height="4" fill="#2678b8"/><rect x="5.5" y="11" width="5" height="4" fill="#2678b8"/><rect x="11" y="11" width="5" height="4" fill="#2678b8"/></svg><span>Box Pivot</span></div>
        <div class="row r1"><svg class="chev" viewBox="0 0 8 10"><path d="M2 1 6 5 2 9" fill="none" stroke="#a5a9ad" stroke-width="1.6"/></svg><svg class="ti"><use href="#folder"/></svg><span>Solid(1)</span></div>
        <div class="row r1"><svg class="chev" viewBox="0 0 10 8"><path d="M1 2 5 6 9 2" fill="none" stroke="#555" stroke-width="1.6"/></svg><svg class="ti"><use href="#folderopen"/></svg><span>History</span></div>
        <div class="row r2"><span class="check"><svg><use href="#tickm"/></svg></span><svg class="ti"><use href="#datum"/></svg><span>XY</span></div>
        <div class="row r2"><span class="check"><svg><use href="#tickm"/></svg></span><svg class="ti"><use href="#datum"/></svg><span>XZ</span></div>
        <div class="row r2"><span class="check"><svg><use href="#tickm"/></svg></span><svg class="ti"><use href="#datum"/></svg><span>YZ</span></div>
        <div class="row r2"><span class="check"><svg><use href="#tickm"/></svg></span><svg class="ti"><use href="#block"/></svg><span>Block2_Base</span></div>
        <div class="row r2"><span class="check"><svg><use href="#tickm"/></svg></span><svg class="ti"><use href="#fillet"/></svg><span>Fillet3</span></div>
        <div class="row r2"><span class="check"><svg><use href="#tickm"/></svg></span><svg class="ti"><use href="#hole"/></svg><span>Hole1</span></div>
        <div class="row r2"><span class="check"><svg><use href="#tickm"/></svg></span><svg class="ti"><use href="#sketch"/></svg><span>(-)Sketch9</span></div>
        <div class="row r3"><svg class="stoparrow" viewBox="0 0 16 12"><path d="M0 6 7 0V3H16V9H7V12Z" fill="#ee1133"/></svg><span>----- MODEL STOP HERE -----</span></div>
      </div>
      <div class="replayhead"><i class="tri"></i>Replay</div>
      <div class="replay">
        <div class="rbrow">
          <span class="rb on"><svg viewBox="0 0 20 20"><path d="M5 3 17 10 5 17Z" fill="#2fb0e8"/></svg></span>
          <span class="rb"><svg viewBox="0 0 20 20"><path d="M3 4 13 10 3 16ZM14 4H17V16H14Z" fill="#b0b3b6"/></svg></span>
          <span class="rb"><svg viewBox="0 0 24 20"><path d="M9 5 17 10 9 15Z" fill="#b0b3b6"/><path d="M5 2C1 7 1 13 5 18M19 2C23 7 23 13 19 18" fill="none" stroke="#b0b3b6" stroke-width="2"/></svg></span>
          <span class="rb"><svg viewBox="0 0 26 20"><path d="M5 5 13 10 5 15Z" fill="#b0b3b6"/><path d="M3 2C0 7 0 13 3 18M15 2H18V18H15ZM22 2C25 7 25 13 22 18M14 10H20" fill="none" stroke="#b0b3b6" stroke-width="1.6"/></svg></span>
          <span class="rb"><svg viewBox="0 0 22 20"><path d="M1 4 11 10 1 16ZM11 4 21 10 11 16Z" fill="#b0b3b6"/></svg></span>
          <span class="rb"><svg viewBox="0 0 22 20"><path d="M21 4 11 10 21 16ZM11 4 1 10 11 16Z" fill="#b0b3b6"/></svg></span>
        </div>
        <div class="rbrow">
          <span class="rb"><svg viewBox="0 0 22 22"><circle cx="6" cy="16" r="3" fill="none" stroke="#a5a8ab" stroke-width="1.6"/><circle cx="15" cy="7" r="3" fill="none" stroke="#a5a8ab" stroke-width="1.6"/><path d="M1 21 4 18M8 14 13 9M17 5 21 1" stroke="#a5a8ab" stroke-width="1.6"/></svg></span>
          <span class="rb"><svg viewBox="0 0 22 22"><path d="M1 21 3 15 16 2 20 6 7 19Z" fill="#c4c6c8" stroke="#8f9295"/></svg></span>
          <span class="rb"><svg viewBox="0 0 24 22"><circle cx="8" cy="3" r="2.4" fill="#919497"/><path d="M8 6 5 13 2 20M6 12 11 15 13 21M7 8 14 11" stroke="#919497" stroke-width="2.2" fill="none"/><rect x="13" y="5" width="10" height="7" fill="#c8cacc"/></svg></span>
          <span class="rb"><svg viewBox="0 0 22 22"><path d="M3 3 19 19M19 3 3 19" stroke="#7d8083" stroke-width="4"/></svg></span>
          <span class="rb"><svg viewBox="0 0 22 22"><rect x="3" y="3" width="16" height="16" fill="#8f9295"/><path d="M3 3H19V11C14 8 8 12 3 9Z" fill="#c9cbcd"/></svg></span>
        </div>
      </div>
    </section>

    <section class="view">
      <svg class="scene" viewBox="360 193 1320 787">
        <path class="backface" d="M761.7 660.7C770 652 785 647 805 651L1228 812 1196 823.3 771.7 663.3Z"/>
        <path class="edge" d="M771.7 663.3 805 651"/>
        <path class="rimup" d="M1196 823.3 1228 812C1250 826 1262 850 1265 880L1231.7 891C1232 865 1220 840 1196 823.3Z"/>
        <path class="rimlo" d="M1231.7 891 1265 880C1265 897 1255 908 1240 915L1216 924C1212 926 1208 927 1203 928.3 1220 918 1230 905 1231.7 891Z"/>
        <path class="front" d="M771.7 663.3 1196 823.3C1220 840 1232 865 1231.7 885 1231 905 1215 925 1203 928.3 1197 929.5 1192 930 1186.7 928.3L760 766.7C740 755 723 730 722.7 702 723 680 745 659 761.7 660.7 765 661 768 662 771.7 663.3Z"/>
        <ellipse class="holeo" cx="767" cy="715" rx="22" ry="28" transform="rotate(-16 767 715)"/>
        <path class="cres1" d="M778 694.5C786 702 790.5 712 789.3 725 783 718 776 706 778 694.5Z"/>
        <ellipse class="holeo" cx="1187.5" cy="875" rx="22" ry="28" transform="rotate(-16 1187.5 875)"/>
        <path class="cres2" d="M1199.3 854.5C1207 862 1211 872 1210 885 1204 878 1197 866 1199.3 854.5Z"/>
        <path class="plane" d="M981 358 1121 311 1070 714 931 762Z"/>
        <path class="cross" d="M1020 536H1030M1025 531V541"/>
        <path class="faint" d="M980 778 1027 762 1028 738M1000 755 1027 762M973 765 1000 755"/>
        <path class="dplane-g" d="M975 691 1035 712.3 1032 745 971.7 725Z"/>
        <path class="dplane-b" d="M949 734 993.3 719 1052.7 740.7 1010 756.7Z"/>
        <path class="dplane-rfill" d="M973.3 780 981.7 709.3 1027.7 694.3 1025.7 741.7Z"/>
        <path class="dplane-r" d="M980 778.3 973.3 780 981.7 709.3 1027.7 694.3 1025.7 741.7"/>
        <path class="st-b" d="M1000 737 1004 708"/><path class="hd-b" d="M999 712 1005.7 695 1011 713Z"/>
        <path class="st-g" d="M1000 737 1022 729"/><path class="hd-g" d="M1018 723 1029 727.5 1022 734Z"/>
        <path class="st-r" d="M1000 737 1024 746"/><path class="hd-r" d="M1023 740 1037 751 1021 751Z"/>
        <text class="ax z" x="1002" y="692">Z</text><text class="ax y pale" x="1031" y="728">Y</text><text class="ax x pale" x="1040" y="758">V</text>
        <path class="st-b" d="M416 922 420 893"/><path class="hd-bl" d="M415 894 421 879 427 895Z"/>
        <path class="st-g" d="M416 922 436 916"/><path class="hd-g" d="M432 910 444 912 435 920Z"/>
        <path class="st-r" d="M416 922 440 931"/><path class="hd-rl" d="M439 925 454 936 436 936Z"/>
        <text class="ax z l" x="418" y="878">Z</text><text class="ax y l" x="445" y="915">Y</text><text class="ax x l" x="456" y="945">X</text>
      </svg>
      <div class="viewbar">
        <svg class="vi" viewBox="0 0 18 18"><path d="M8 2H16V16H8" fill="none" stroke="#23506f" stroke-width="2"/><path d="M1 9 7 4V7H13V11H7V14Z" fill="#ea1c24"/></svg>
        <svg class="vi" viewBox="0 0 18 18"><rect x="3" y="1" width="6" height="6" fill="none" stroke="#3a9ec4"/><path d="M3 9C7 10 6 15 17 15M3 13C8 13 9 17 17 17" stroke="#65b23c" stroke-width="1.6" fill="none"/></svg><span class="caret v"></span>
        <svg class="vi" viewBox="0 0 18 18"><path d="M2 16 5 10 12 2 16 5 9 12Z" fill="#ef6a5c" stroke="#a44"/><path d="M9 8 12 2 16 5 11 10Z" fill="#ffdca0"/></svg>
        <svg class="vi" viewBox="0 0 18 18"><path d="M1 8 9 4 17 8 9 12Z" fill="#ffd24a"/><path d="M1 8 9 12V17L1 13Z" fill="#8edcf4"/><path d="M9 12 17 8V13L9 17Z" fill="#2a9fcc"/><path d="M9 1V7" stroke="#39a03a" stroke-width="2"/></svg>
        <svg class="vi" viewBox="0 0 18 18"><path d="M1 5 10 1 17 4 9 8Z" fill="#8edcf4"/><path d="M1 5 9 8V17L1 14Z" fill="#2a9fcc"/><path d="M9 8 17 4V13L9 17Z" fill="#0f6f9e"/></svg><span class="caret v"></span>
        <svg class="vi" viewBox="0 0 18 18"><path d="M2 5 10 1 17 4 9 8ZM2 5 9 8V17L2 13ZM9 8 17 4V13L9 17Z" fill="#fff" stroke="#8fa3ae"/></svg><span class="caret v"></span>
        <svg class="vi" viewBox="0 0 18 18"><path d="M9 1 17 6 15 15 4 16 1 7Z" fill="#f5a623" stroke="#c9400f"/><path d="M9 1 9 9 17 6M9 9 15 15M9 9 4 16M9 9 1 7" stroke="#c9400f"/></svg><span class="caret v"></span>
        <svg class="vi" viewBox="0 0 18 18"><rect x="1" y="1" width="16" height="16" fill="#3e9ecb"/><circle cx="9" cy="9" r="5.5" fill="#f6f2d5" stroke="#e7b322" stroke-width="2.4"/></svg><span class="caret v"></span>
        <svg class="vi" viewBox="0 0 18 18"><rect x="1.5" y="1.5" width="15" height="15" fill="#f2f8fb" stroke="#7fa6bb"/><rect x="3" y="10" width="5" height="5" fill="#7fb7d6"/><path d="M10 5H15" stroke="#3a9ec4" stroke-dasharray="1 1"/></svg>
        <svg class="vi" viewBox="0 0 18 18"><path d="M3 1V13M15 1V13" stroke="#2d6da8" stroke-width="2"/><path d="M3 7H15" stroke="#d3161c" stroke-width="1.6"/><path d="M2 16H16" stroke="#d3161c" stroke-width="2"/></svg><span class="caret v"></span>
        <svg class="vi" viewBox="0 0 18 18"><rect x="1" y="1" width="16" height="13" fill="#6f7c88"/><path d="M1 9C6 6 12 11 17 8V14H1Z" fill="#526a94"/><rect x="4" y="14" width="10" height="3" fill="#808a92"/></svg><span class="caret v"></span>
        <span class="swatch black"></span>
        <span class="swatch blue"></span>
        <svg class="vi" viewBox="0 0 18 18"><path d="M1 8 8 4 17 7 9 12Z" fill="#5fc6c8"/><path d="M1 8 9 12 17 7V10L9 15 1 11Z" fill="#2a8f98"/></svg><span class="caret v"></span>
        <span class="layer"><svg class="bulb" viewBox="0 0 12 18"><path d="M6 1a5 5 0 0 1 3 9V13H3V10A5 5 0 0 1 6 1Z" fill="#fff7c8" stroke="#b99b1e"/><rect x="3.5" y="14" width="5" height="3" fill="#666"/></svg><svg class="sun" viewBox="0 0 16 16"><rect width="16" height="16" fill="#d4e54d"/><circle cx="8" cy="8" r="6.6" fill="#ffd83a" stroke="#4a8ab0"/></svg><span class="ltext">Layer0000</span><i class="caret"></i></span>
      </div>
      <div class="hints">You can set the hotkey in Customize Settings.<br>Click "Help/Show Hints" to disable these hints.</div>
      <div class="scale-label">85.15 mm</div>
    </section>
  </main>

  <footer class="status">
    <span class="stext">Select command or entity.</span>
    <span class="stsep"></span>
    <span class="st-hot"><svg viewBox="0 0 18 18"><rect x="1" y="2" width="16" height="14" fill="#dbe7f7" stroke="#3a64b8"/><rect x="3" y="4" width="2" height="10" fill="#3a64b8"/><path d="M8 5H14V8H12V15H10V8H8Z" fill="#c8242a"/></svg></span>
    <svg class="sti s2" viewBox="0 0 18 18"><rect x="1" y="2" width="16" height="11" fill="#36b4dc"/><rect x="5" y="13" width="8" height="3" fill="#444"/></svg>
    <svg class="sti s3" viewBox="0 0 18 18"><rect x="2" y="1" width="14" height="16" fill="#e6eefb" stroke="#3a64b8"/><rect x="2" y="1" width="14" height="3" fill="#3a64b8"/><path d="M5 7H13M5 10H13M5 13H13" stroke="#555"/></svg>
    <span class="stinput"></span>
  </footer>
  <div class="taskbar"><span class="tk-dark a"></span><span class="tk-light"></span><span class="tk-dark c"></span><span class="tk-red"></span><span class="tk-dark b"></span></div>
</div>
</body>
</html>
```
FILE: styles.css
```css
* { box-sizing: border-box; }
html, body { margin: 0; padding: 0; height: 100%; }
body { background: #e3e5e8; font: 12px/15px "Liberation Sans", Arial, sans-serif; color: #2c2f33; overflow: hidden; }
.defs { position: absolute; width: 0; height: 0; }
.dnum { font: bold 11px "Liberation Sans", sans-serif; fill: #d3161c; }
.helpq { font: bold 14px "Liberation Sans", sans-serif; fill: #fff; }
.app { width: 1680px; height: 1012px; display: flex; flex-direction: column; }

.caret { display: inline-block; width: 0; height: 0; border: 3px solid transparent; border-top: 4px solid #444; border-bottom: 0; vertical-align: middle; }
.caret.in { margin-left: 3px; }

/* title bar */
.titlebar { height: 26px; display: flex; align-items: center; position: relative; padding-left: 1px; flex: none; overflow: hidden; }
.qi { width: 18px; height: 18px; margin-right: 5px; flex: none; }
.logo { margin-right: 5px; }
.qsep { width: 1px; height: 14px; background: #9aa; margin-right: 10px; }
.i-new { margin-right: 8px; }
.caret.small { margin-left: -2px; margin-right: 10px; }
.ddmark { width: 7px; height: 7px; border-top: 1px solid #222; border-bottom: 4px solid #222; margin-right: 8px; flex: none; clip-path: polygon(0 0, 100% 0, 100% 40%, 50% 100%, 0 40%); }
.backmark { width: 8px; height: 14px; margin-right: 14px; flex: none; }
.menu { display: flex; gap: 13.2px; font-size: 12px; color: #222; margin-top: -3px; }
.apptitle { margin-left: 242px; color: #3a3d40; font-size: 11px; white-space: nowrap; }
.doctitle { margin-left: 24px; color: #3a3d40; font-size: 11.85px; white-space: nowrap; }
.winbtns { margin-left: auto; display: flex; gap: 9px; margin-right: 9px; margin-top: -2px; }
.winbtns svg { width: 13px; height: 13px; }
.cursor-glow { position: absolute; left: 638px; top: -20px; width: 42px; height: 42px; border-radius: 50%; background: rgba(255, 236, 150, .55); }

/* ribbon tabs */
.ribbontabs { height: 22px; display: flex; align-items: stretch; flex: none; padding-left: 2px; position: relative; }
.filetab { width: 55px; margin-top: 1px; background: #3b6fc6; border: 1px solid #2d5cae; color: #fff; text-align: center; line-height: 19px; font-size: 12px; margin-right: 6px; }
.rtab { padding: 0 10.9px; line-height: 22px; font-size: 11.8px; color: #3a4048; white-space: nowrap; }
.rtab.active { width: 51px; padding: 0; text-align: center; margin-right: 1px; background: #fff; border: 1px solid #cfd3d8; border-bottom: 0; color: #333; margin-bottom: -1px; position: relative; z-index: 2; }
.rtab-right { position: absolute; left: 0; top: 0; width: 1680px; height: 22px; pointer-events: none; }
.rtab-right > * { position: absolute; }
.r-home { left: 1520px; top: 5px; width: 12px; height: 12px; }
.r-gear { left: 1556px; top: 1px; width: 20px; height: 20px; }
.r-help { left: 1592px; top: 2px; width: 18px; height: 18px; }
.r-caret { left: 1617px; top: 9px; }
.r-min { left: 1630px; top: 6px; width: 11px; height: 11px; }
.r-rest { left: 1645px; top: 5px; width: 12px; height: 12px; }
.r-close { left: 1663px; top: 5px; width: 12px; height: 12px; }

/* ribbon */
.ribbon { height: 94px; display: flex; background: #fff; border-top: 1px solid #cfd3d8; border-bottom: 1px solid #c6cace; flex: none; }
.group { display: flex; flex-direction: column; border-right: 1px solid #dcdfe3; flex: none; }
.tools { display: grid; height: 72px; padding-top: 5px; }
.gname { text-align: center; color: #6f7c8c; line-height: 20px; font-size: 11.7px; padding-left: 3px; }
.g1 { width: 279px; } .g1 .tools { padding-left: 9px; grid-template-columns: 39px 48px 50px 55px 35px 40px; }
.g2 { width: 344px; } .g2 .tools { padding-left: 7px; grid-template-columns: 36px 58px 36px 36px 36px 40px 44px 45px; }
.g3 { width: 398px; } .g3 .tools { padding-left: 8px; grid-template-columns: 46px 45px 60px 38px 54px 54px 52px 34px; }
.g4 { width: 296px; } .g4 .tools { padding-left: 10px; grid-template-columns: 64px 86px 46px 88px; }
.g5 { width: 260px; } .g5 .tools { padding-left: 10px; grid-template-columns: 62px 62px 28px 52px 35px; }
.g6 { width: 63px; } .g6 .tools { padding-left: 3px; grid-template-columns: 60px; }
.g6 .gname, .g5 .gname { padding-left: 0; }
.tool { display: flex; flex-direction: column; align-items: center; position: relative; white-space: nowrap; }
.ic { width: 34px; height: 34px; flex: none; margin-bottom: 3px; }
.l { height: 15px; line-height: 15px; font-size: 11.8px; color: #333; display: block; text-align: center; }
.far1 .caret { margin-left: 16px; } .far1 { padding-left: 16px; }
.far2 .caret { margin-left: 20px; } .far2 { padding-left: 20px; }
.hot { margin-top: -2px; height: 68px; padding-top: 2px; border: 1px solid #f7d46a; }
.hot .ic { margin-top: -1px; margin-bottom: 2px; }
.hot::after { content: ""; position: absolute; left: 0; right: 0; top: 37px; border-top: 1px solid #f7d46a; }

/* toolbar */
.toolbar { height: 30px; display: flex; align-items: center; flex: none; position: relative; padding-top: 2px; padding-left: 4px; }
.grip { width: 2px; height: 16px; background: repeating-linear-gradient(#7b8288 0 2px, transparent 2px 4px); margin-right: 6px; }
.tb-hot { width: 23px; height: 22px; background: #ffe38c; border: 1px solid #e8b23e; display: flex; align-items: center; justify-content: center; flex: none; }
.tb-hot svg { width: 18px; height: 18px; }
.tbi { width: 18px; height: 18px; flex: none; }
.tbsep { width: 1px; height: 20px; background: #b9bdc1; flex: none; }
.t2 { margin-left: 3px; } .t3 { margin-left: 1px; } .t4 { margin-left: 11px; }
.t5 { margin-left: 3px; } .t6 { margin-left: 9px; } .t7 { margin-left: 8px; } .t8 { margin-left: 3px; }
.combo { background: #fff; border: 1px solid #d0d4d8; height: 22px; line-height: 20px; padding-left: 4px; position: relative; display: block; flex: none; font-size: 12px; }
.combo .caret { position: absolute; right: 5px; top: 8px; }
.c-all { width: 103px; margin-left: 5px; }
.t9 { margin-left: 0; }
.c-asm { width: 138px; margin-left: 1px; }
.t10 { margin-left: 3px; } .t10b { margin-left: 6px; } .t11 { margin-left: 8px; }
.t12 { margin-left: 8px; } .t13 { margin-left: 3px; } .t14 { margin-left: 6px; } .t15 { margin-left: 7px; }
.t16 { margin-left: 4px; } .t17 { margin-left: 6px; }
.c-norm { width: 101px; margin-left: 5px; background: #eceef0; color: #8a8e92; border-color: #e3e5e8; }
.caret.lt { border-top-color: #b0b3b6; }
.t18 { margin-left: 8px; } .t19 { margin-left: 3px; }

/* doc row */
.docrow { height: 21px; display: flex; flex: none; }
.mgrhead { width: 360px; padding-left: 6px; line-height: 20px; color: #55606c; font-size: 12px; position: relative; flex: none; }
.mg-pin { position: absolute; left: 322px; top: 5px; width: 10px; height: 10px; }
.mg-x { position: absolute; left: 340px; top: 4px; width: 14px; height: 12px; }
.dtabs { flex: 1; display: flex; padding-left: 9px; align-items: flex-end; position: relative; }
.dtab { display: flex; align-items: center; height: 21px; font-size: 11.5px; color: #333; white-space: nowrap; flex: none; }
.dx { width: 12px; height: 12px; flex: none; margin-left: 4px; }
.d1 { padding: 0 21px 0 24px; }
.d2 { padding: 0 16px 0 24px; }
.d3 { padding: 0 13px 0 12px; background: #fff; border: 1px solid #cfd3d8; border-bottom: 0; font-size: 11.8px; }
.d3 .dx { margin-left: 5px; }
.dplus { width: 12px; height: 12px; margin-right: 6px; flex: none; }
.dnew { width: 12px; height: 12px; margin: 0 0 4px 7px; flex: none; }
.dmore { position: absolute; right: 7px; top: 6px; width: 12px; height: 12px; }

/* main */
.main { flex: 1; min-height: 0; display: flex; background: #e3e5e8; }
.rail { width: 31px; flex: none; display: flex; flex-direction: column; padding-left: 2px; }
.railbtn { height: 48px; display: flex; align-items: center; justify-content: center; }
.railbtn svg { width: 25px; height: 25px; }
.railbtn.active { height: 44px; background: #fff; border: 1px solid #cfd3d8; border-right: 0; margin-bottom: 1px; }
.manager { width: 326px; flex: none; display: flex; flex-direction: column; border: 1px solid #c4c9ce; border-bottom: 2px solid #c4c9ce; }
.mgrtop { display: flex; gap: 2px; padding: 1px; flex: none; }
.c-show { width: 160px; padding-left: 3px; }
.mgrsearch { flex: 1; background: #fff; border: 1px solid #d0d4d8; height: 22px; }
.tree { flex: 1; min-height: 0; padding-top: 2px; margin: 0 1px; border: 1px solid #d0d4d8; background: repeating-linear-gradient(#f6f6f6 0 1px, #fff 1px 19px, #f6f6f6 19px 36px); }
.row { height: 18px; display: flex; align-items: center; white-space: nowrap; font-size: 11.5px; color: #1f2226; }
.ti { width: 16px; height: 16px; flex: none; }
.r0 { padding-left: 3px; } .r0 .ti { margin-right: 4px; }
.r1 { padding-left: 5px; } .r1 .ti { margin: 0 2px 0 5px; }
.chev { width: 9px; height: 9px; flex: none; }
.r2 { padding-left: 32px; } .r2 .ti { margin: 0 2px 0 7px; }
.check { width: 13px; height: 13px; border: 1px solid #222; background: #fff; display: flex; flex: none; }
.check svg { width: 11px; height: 11px; }
.r3 { padding-left: 33px; color: #ee1133; font-size: 11.9px; }
.stoparrow { width: 16px; height: 12px; margin-right: 2px; flex: none; }
.replayhead { height: 23px; line-height: 22px; margin: 2px 1px 0; background: #fff; border: 1px solid #d0d4d8; font-weight: bold; padding-left: 5px; color: #3a3d40; flex: none; display: flex; align-items: center; }
.tri { width: 0; height: 0; border: 5px solid transparent; border-top: 7px solid #555; border-bottom: 0; margin-right: 6px; }
.replay { flex: none; height: 81px; padding-top: 5px; display: flex; flex-direction: column; gap: 3px; align-items: center; }
.rbrow { display: flex; gap: 2px; }
.rb { width: 37px; height: 33px; border: 1px solid #d2d5d8; display: flex; align-items: center; justify-content: center; }
.rb.on { background: #fff; border-color: #b9bdc1; }
.rb svg { width: 22px; height: 22px; }

/* view */
.view { flex: 1; margin-left: 3px; position: relative; background: linear-gradient(#fff, #a0a0a0); border-left: 1px solid #fff; overflow: hidden; }
.scene { position: absolute; inset: 0; width: 1320px; height: 787px; }
.backface { fill: #9ab8c6; stroke: #111; stroke-width: 1.1; }
.edge { stroke: #111; stroke-width: 1; fill: none; }
.rimup { fill: url(#rimup); stroke: #111; stroke-width: 1.1; }
.rimlo { fill: url(#rimlo); stroke: #111; stroke-width: 1.1; }
.front { fill: #9ebcc9; stroke: #111; stroke-width: 1.1; }
.holeo { fill: url(#holeg); stroke: #111; stroke-width: 1.1; }
.cres1 { fill: #d6d6d6; stroke: #111; stroke-width: .8; }
.cres2 { fill: #b8b8b8; stroke: #111; stroke-width: .8; }
.plane { fill: none; stroke: #5f5f5f; stroke-width: 2; }
.cross { stroke: #8f8f8f; stroke-width: 1.4; fill: none; }
.faint { stroke: #8a9ca8; stroke-opacity: .45; fill: none; }
.dplane-g { fill: #7cd07c; fill-opacity: .18; stroke: #22e022; }
.dplane-b { fill: #6a82e0; fill-opacity: .28; stroke: #1a32f0; }
.dplane-rfill { fill: #d86060; fill-opacity: .1; }
.dplane-r { fill: none; stroke: #ef1c1c; }
.st-b { stroke: #1414e8; stroke-width: 5; fill: none; }
.st-g { stroke: #12c012; stroke-width: 5; fill: none; }
.st-r { stroke: #e81414; stroke-width: 5; fill: none; }
.hd-b { fill: #c8c8f8; stroke: #1414e8; }
.hd-bl { fill: #5a5af5; stroke: #1414e8; }
.hd-g { fill: #12c012; }
.hd-r { fill: #fbc8c8; stroke: #e81414; }
.hd-rl { fill: #f79a9a; stroke: #e81414; }
.ax { font: 14px "Liberation Sans", sans-serif; }
.ax.z { fill: #1414e8; } .ax.y { fill: #12c012; } .ax.x { fill: #ee2020; }
.ax.pale { opacity: .55; }
.ax.l { font-size: 15px; }
.viewbar { position: relative; height: 33px; display: flex; align-items: center; justify-content: center; padding-right: 10px; }
.vi { width: 19px; height: 19px; margin-left: 7.3px; flex: none; }
.caret.v { margin-left: 5.5px; }
.swatch { width: 17px; flex: none; margin-left: 8px; }
.swatch.black { height: 6px; background: #000; margin-left: 10px; }
.swatch.blue { height: 16px; background: #b6dcf2; border: 1px solid #222; }
.layer { margin-left: 6px; width: 121px; height: 22px; background: #fff; border: 1px solid #cfd3d8; display: flex; align-items: center; padding-left: 5px; position: relative; flex: none; font-size: 11.5px; }
.bulb { width: 11px; height: 16px; margin-right: 5px; }
.sun { width: 14px; height: 14px; margin-right: 3px; }
.layer .caret { position: absolute; right: 5px; top: 8px; }
.hints { position: relative; padding-left: 14px; color: #111; font-size: 13.2px; line-height: 16px; margin-top: -6px; }
.scale-label { position: absolute; left: 4px; bottom: 0; font-size: 16px; line-height: 20px; color: #111; }

/* status */
.status { height: 30px; flex: none; display: flex; align-items: center; padding-left: 6px; padding-top: 2px; position: relative; }
.stext { color: #3a3d40; font-size: 12px; width: 1228px; flex: none; }
.stsep { width: 1px; height: 24px; background: #8f9499; flex: none; }
.st-hot { width: 23px; height: 22px; margin-left: 7px; background: #ffe38c; border: 1px solid #d9a83a; display: flex; align-items: center; justify-content: center; flex: none; }
.st-hot svg { width: 17px; height: 17px; }
.sti { width: 16px; height: 16px; flex: none; }
.s2 { margin-left: 9px; } .s3 { margin-left: 14px; }
.stinput { width: 349px; height: 21px; margin-left: 11px; background: #fff; border: 1px solid #cfd3d8; flex: none; }

/* taskbar */
.taskbar { height: 2px; display: flex; flex: none; }
.tk-dark { background: #111; height: 2px; }
.tk-dark.a { width: 48px; } .tk-dark.b { flex: 1; } .tk-dark.c { width: 105px; }
.tk-light { width: 344px; background: #e3e5e8; }
.tk-red { width: 40px; background: #b21c22; }
```
